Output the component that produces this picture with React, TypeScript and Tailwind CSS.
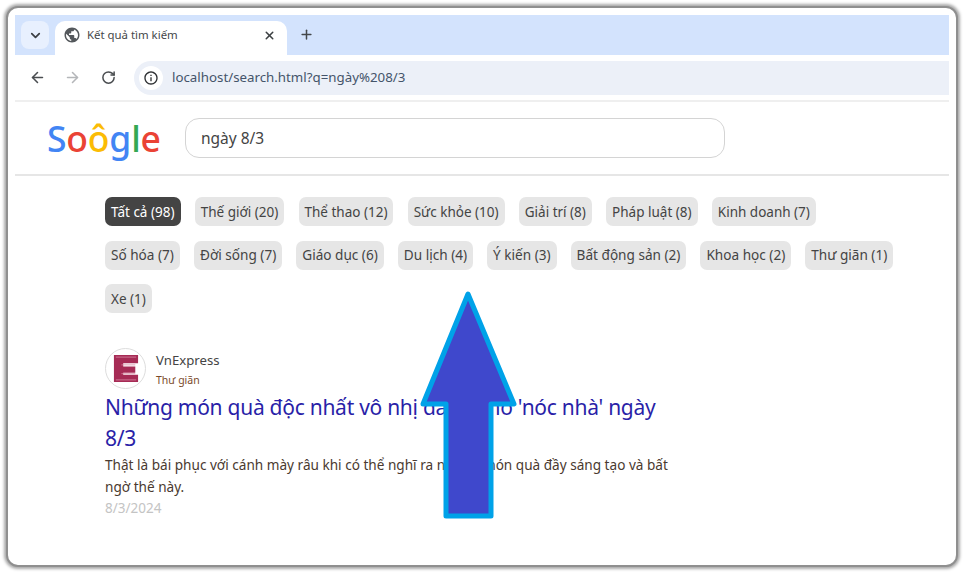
import { ArrowLeft, ArrowRight, RotateCw, X, Plus, ChevronDown } from 'lucide-react'
import { MdPublic, MdInfoOutline } from 'react-icons/md'

const ROW_1 = ['Tất cả (98)', 'Thế giới (20)', 'Thể thao (12)', 'Sức khỏe (10)', 'Giải trí (8)', 'Pháp luật (8)', 'Kinh doanh (7)']
const ROW_2 = ['Số hóa (7)', 'Đời sống (7)', 'Giáo dục (6)', 'Du lịch (4)', 'Ý kiến (3)', 'Bất động sản (2)', 'Khoa học (2)', 'Thư giãn (1)']

function Pill({ label, active }: { label: string; active?: boolean }) {
  return (
    <span
      className={`h-[29px] px-[6px] pt-px rounded-[7px] flex items-center whitespace-nowrap ${
        active ? 'bg-[#444444] text-white' : 'bg-[#e6e6e6] text-[#444444]'
      }`}
    >
      {label}
    </span>
  )
}

export default function App() {
  return (
    <div className="relative w-[964px] h-[573px] bg-white p-[6px] overflow-hidden font-['Noto_Sans',sans-serif]">
      {/* Window frame */}
      <div className="h-full rounded-[12px] border-2 border-[#8f8f8f] shadow-[0_0_3px_2px_#aaaaaa] p-[7px] bg-white">
        <div className="h-full flex flex-col">
          {/* Tab strip */}
          <div className="h-[40px] shrink-0 bg-[#d3e3fd] flex items-end relative">
            <div className="absolute left-[6px] top-[6px] w-[28px] h-[28px] rounded-[8px] bg-[#e8f0fe] flex items-center justify-center">
              <ChevronDown size={15} strokeWidth={2.8} className="text-[#3c4043]" />
            </div>
            <div className="ml-[40px] w-[232px] h-[34px] bg-white rounded-t-[10px] flex items-center pl-[8px] pr-[11px] pb-[6px]">
              <MdPublic size={18} className="text-[#54585c]" />
              <span className="ml-[6px] text-[11.4px] text-[#45474a] flex-1">Kết quả tìm kiếm</span>
              <X size={13} strokeWidth={2.8} className="text-[#3c4043]" />
            </div>
            <Plus size={15} strokeWidth={2.4} className="ml-[12px] mb-[13px] text-[#44474a]" />
          </div>

          {/* Toolbar */}
          <div className="h-[47px] shrink-0 bg-white rounded-tl-[10px] flex items-center pl-[14px] border-b-2 border-[#efefef]">
            <ArrowLeft size={17} strokeWidth={2.2} className="text-[#4a4d50]" />
            <ArrowRight size={17} strokeWidth={2.2} className="ml-[18px] text-[#b4b6b9]" />
            <RotateCw size={15} strokeWidth={2.4} className="ml-[20px] text-[#4a4d50]" />
            <div className="ml-[18px] flex-1 h-[34px] rounded-l-[17px] bg-[#ecf0f8] flex items-center pl-[5px]">
              <span className="w-[24px] h-[24px] rounded-full bg-white flex items-center justify-center">
                <MdInfoOutline size={16} className="text-[#2e3033]" />
              </span>
              <span className="ml-[9px] text-[13.3px] text-[#44546a]">localhost/search.html?q=ngày%208/3</span>
            </div>
          </div>

          {/* Search header */}
          <div className="h-[74px] shrink-0 border-b-2 border-[#e6e6e6] flex items-center pl-[32px]">
            <div className="w-[138px] pt-[2px] text-[35.500px] font-medium leading-none tracking-[-0.2px]">
              <span className="text-[#4285f4]">S</span>
              <span className="text-[#ea4335]">o</span>
              <span className="text-[#fbbc05]">ô</span>
              <span className="text-[#4285f4]">g</span>
              <span className="text-[#34a853]">l</span>
              <span className="text-[#ea4335]">e</span>
            </div>
            <div className="w-[540px] h-[40px] rounded-[14px] border border-[#d4d4d4] flex items-center pl-[15px] pt-[2px] text-[15.5px] text-[#444444]">
              ngày 8/3
            </div>
          </div>

          {/* Category pills */}
          <div className="pl-[90px] pt-[21px] flex flex-col gap-[14.5px]">
            <div className="flex gap-[14.2px] text-[13.5px]">
              {ROW_1.map((label, i) => (
                <Pill key={label} label={label} active={i === 0} />
              ))}
            </div>
            <div className="flex gap-[14px] text-[13.6px]">
              {ROW_2.map((label) => (
                <Pill key={label} label={label} />
              ))}
            </div>
            <div className="flex gap-[14px] text-[13.5px]">
              <Pill label="Xe (1)" />
            </div>
          </div>

          {/* Result */}
          <div className="pl-[90px] pt-[35px] w-[665px]">
            <div className="flex items-center gap-[10px] h-[40px]">
              <span className="w-[41px] h-[41px] rounded-full border border-[#dddddd] flex items-center justify-center">
                <svg width="26" height="29" viewBox="0 0 28 28" preserveAspectRatio="none">
                  <path d="M1 1h26v8H11v3h13v6H11v2h16v7H1z" fill="#a62b55" />
                  <path d="M3 3h22M3 25h22M9 10.500h15M9 19h15" stroke="#d98aa3" strokeWidth="0.8" fill="none" />
                </svg>
              </span>
              <div className="flex flex-col pt-[2px]">
                <span className="text-[13.2px] leading-[21px] text-[#444444]">VnExpress</span>
                <span className="text-[10.5px] leading-[18px] text-[#7a4a2a]">Thư giãn</span>
              </div>
            </div>
            <h2 className="mt-[4px] text-[21px] tracking-[-0.27px] leading-[31px] text-[#2a1fa8] font-normal">
              Những món quà độc nhất vô nhị dành cho 'nóc nhà' ngày 8/3
            </h2>
            <p className="text-[13.6px] leading-[22px] text-[#4a3a30]">
              Thật là bái phục với cánh mày râu khi có thể nghĩ ra những món quà đầy sáng tạo và bất ngờ thế này.
            </p>
            <p className="text-[13.5px] leading-[20px] text-[#c4c4c4]">8/3/2024</p>
          </div>
        </div>
      </div>

      {/* Annotation arrow */}
      <svg className="absolute left-0 top-0" width="964" height="573" viewBox="0 0 964 573">
        <path
          d="M468 294 L514 404 H491 V516 H446 V404 H423 Z"
          fill="#3f48cc"
          stroke="#00a2e8"
          strokeWidth="5"
          strokeLinejoin="round"
        />
      </svg>
    </div>
  )
}
